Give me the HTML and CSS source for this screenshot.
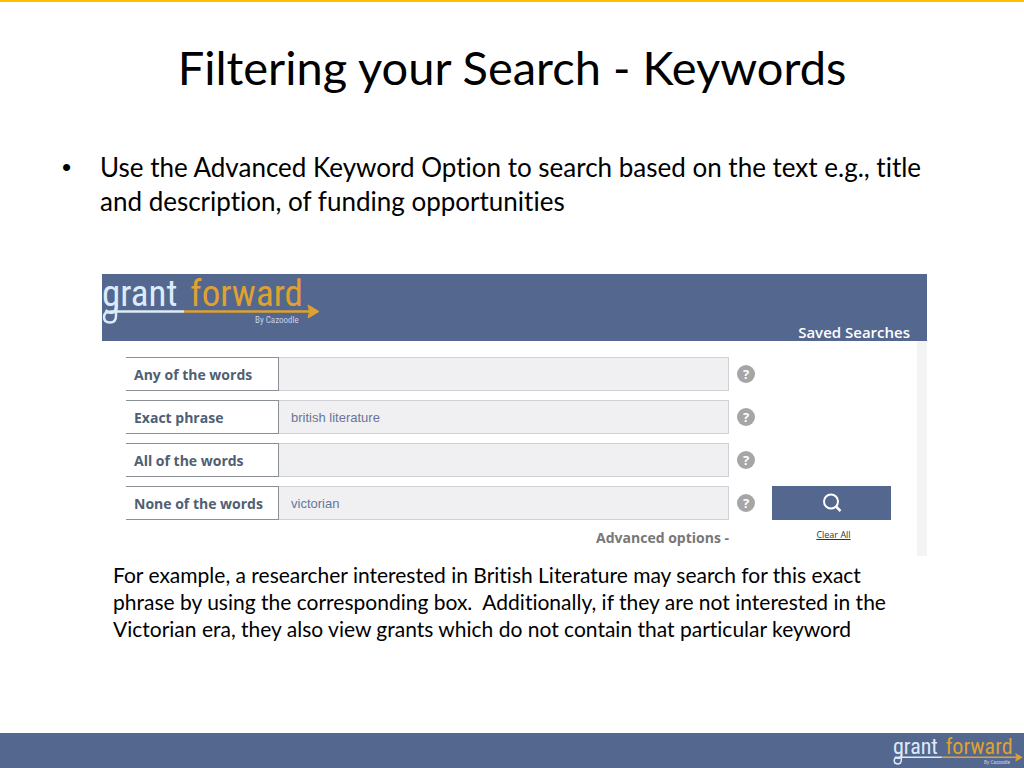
FILE: index.html
```html
<!DOCTYPE html>
<html lang="en">
<head>
  <meta charset="UTF-8">
  <title>Filtering your Search - Keywords</title>
  <link rel="stylesheet" href="styles.css">
</head>
<body>
  <main>
    <h1>Filtering your Search - Keywords</h1>

    <ul class="points">
      <li>Use the Advanced Keyword Option to search based on the text e.g., title and description, of funding opportunities</li>
    </ul>

    <!-- Search panel -->
    <div class="panel">
      <div class="panel-header">
        <svg class="logo" viewBox="0 0 220 52" role="img" aria-label="grant forward By Cazoodle">
          <text class="logo-grant" x="0" y="32">grant</text>
          <text class="logo-forward" x="88" y="32">forward</text>
          <path d="M14 30V42Q14 48.500 8 48.500Q2 48.500 2 43Q2 37.500 9 37.500H82" fill="none" stroke="#dcebfa" stroke-width="2.500"/>
          <path d="M82 37.500H210" stroke="#dfa12f" stroke-width="2.500"/>
          <path d="M206 31L217 37.500L206 44Q209 37.500 206 31Z" fill="#dfa12f" stroke="#dfa12f" stroke-linejoin="round"/>
          <text class="logo-by" x="153" y="49">By Cazoodle</text>
        </svg>
        <a class="saved" href="#">Saved Searches</a>
      </div>

      <form class="search">
        <div class="fields">
          <div class="row">
            <label for="anyWords">Any of the words</label>
            <input type="text" id="anyWords">
            <button type="button" class="help" aria-label="Help">?</button>
          </div>
          <div class="row">
            <label for="exactPhrase">Exact phrase</label>
            <input type="text" id="exactPhrase" value="british literature">
            <button type="button" class="help" aria-label="Help">?</button>
          </div>
          <div class="row">
            <label for="allWords">All of the words</label>
            <input type="text" id="allWords">
            <button type="button" class="help" aria-label="Help">?</button>
          </div>
          <div class="row">
            <label for="noneWords">None of the words</label>
            <input type="text" id="noneWords" value="victorian">
            <button type="button" class="help" aria-label="Help">?</button>
          </div>
          <a class="advanced" href="#">Advanced options -</a>
        </div>
        <div class="actions">
          <button type="submit" class="submit" aria-label="Search">
            <svg width="20" height="20" viewBox="0 0 20 20" fill="none" stroke="#fff">
              <circle cx="9" cy="8.500" r="7" stroke-width="2"/>
              <path d="M14 13.500L18.500 18" stroke-width="2.500"/>
            </svg>
          </button>
          <button type="reset" class="clear">Clear All</button>
        </div>
      </form>
    </div>

    <p class="example">For example, a researcher interested in British Literature may search for this exact phrase by using the corresponding box.&nbsp; Additionally, if they are not interested in the Victorian era, they also view grants which do not contain that particular keyword</p>
  </main>

  <footer>
    <svg class="logo" viewBox="0 0 220 52" role="img" aria-label="grant forward By Cazoodle">
      <text class="logo-grant" x="0" y="32">grant</text>
      <text class="logo-forward" x="88" y="32">forward</text>
      <path d="M14 30V42Q14 48.500 8 48.500Q2 48.500 2 43Q2 37.500 9 37.500H82" fill="none" stroke="#dcebfa" stroke-width="2.500"/>
      <path d="M82 37.500H210" stroke="#dfa12f" stroke-width="2.500"/>
      <path d="M206 31L217 37.500L206 44Q209 37.500 206 31Z" fill="#dfa12f" stroke="#dfa12f" stroke-linejoin="round"/>
      <text class="logo-by" x="153" y="49">By Cazoodle</text>
    </svg>
  </footer>
</body>
</html>
```
FILE: styles.css
```css
* {
  box-sizing: border-box;
}
body {
  margin: 0;
  min-height: 100vh;
  display: flex;
  flex-direction: column;
  border-top: 2px solid #ffc000;
  background: #fff;
  color: #000;
  font-family: Lato, sans-serif;
  font-variant-ligatures: none;
}
main {
  flex: 1;
}
h1 {
  margin: 37px 0 0;
  font-size: 47px;
  font-weight: 400;
  line-height: 56px;
  text-align: center;
}
.points {
  margin: 55px 72px 0 62px;
  padding: 0 0 0 38px;
  list-style: none;
  font-size: 26px;
  line-height: 34px;
}
.points li::before {
  content: "•";
  float: left;
  margin-left: -38px;
  font-family: "Liberation Sans", sans-serif;
}
/* Search panel */
.panel {
  margin: 56px 97px 0 102px;
}
.panel-header {
  display: flex;
  justify-content: space-between;
  align-items: flex-end;
  height: 67px;
  padding-right: 17px;
  background: #54678e;
}
.panel-header .logo {
  align-self: flex-start;
  width: 220px;
}
.logo {
  overflow: visible;
}
.logo text {
  font-family: "Roboto Condensed", Roboto, sans-serif;
}
.logo .logo-grant {
  fill: #dcebfa;
  font-size: 37px;
}
.logo .logo-forward {
  fill: #dfa12f;
  font-size: 37px;
}
.logo .logo-by {
  fill: #c6d2e6;
  font-size: 9px;
}
.saved {
  color: #fff;
  font-family: "Open Sans", sans-serif;
  font-size: 15px;
  font-weight: 600;
  line-height: 18px;
  text-decoration: none;
}
.search {
  display: flex;
  gap: 17px;
  height: 215px;
  padding: 16px 26px 0 24px;
  border-right: 10px solid #f4f4f5;
}
.fields {
  flex: 1;
  display: flex;
  flex-direction: column;
  gap: 9px;
}
.row {
  display: flex;
  align-items: center;
  height: 34px;
}
.row label {
  width: 153px;
  height: 34px;
  padding-left: 8px;
  border: 1px solid #8b9097;
  border-left: none;
  color: #4f6072;
  font-family: "Open Sans", sans-serif;
  font-size: 14px;
  font-weight: 700;
  line-height: 34px;
}
.row input {
  flex: 1;
  min-width: 0;
  height: 34px;
  padding: 0 12px;
  border: 1px solid #d0d1d4;
  border-left: none;
  background: #f0f0f2;
  color: #66759a;
  font-family: "Liberation Sans", sans-serif;
  font-size: 13px;
}
.help {
  width: 18px;
  height: 18px;
  margin-left: 8px;
  padding: 0;
  border: none;
  border-radius: 50%;
  background: #a6a6a6;
  color: #fff;
  font: bold 13px/18px "Open Sans", sans-serif;
}
.advanced {
  align-self: flex-end;
  margin-right: 26px;
  color: #777;
  font-family: "Open Sans", sans-serif;
  font-size: 14px;
  font-weight: 700;
  line-height: 18px;
  text-decoration: none;
}
.actions {
  display: flex;
  flex-direction: column;
  align-items: center;
  width: 119px;
  padding-top: 129px;
}
.submit {
  display: flex;
  align-items: center;
  justify-content: center;
  width: 100%;
  height: 34px;
  border: none;
  background: #54678e;
}
.clear {
  margin: 8px 0 0 4px;
  padding: 0;
  border: none;
  background: none;
  color: #333;
  font: 9px/14px "Open Sans", sans-serif;
  text-decoration: underline;
}
.example {
  margin: 5px 120px 0 113px;
  font-size: 21px;
  line-height: 27px;
}
footer {
  display: flex;
  justify-content: flex-end;
  height: 35px;
  background: #54678e;
}
footer .logo {
  width: 131px;
  height: 35px;
}
```
